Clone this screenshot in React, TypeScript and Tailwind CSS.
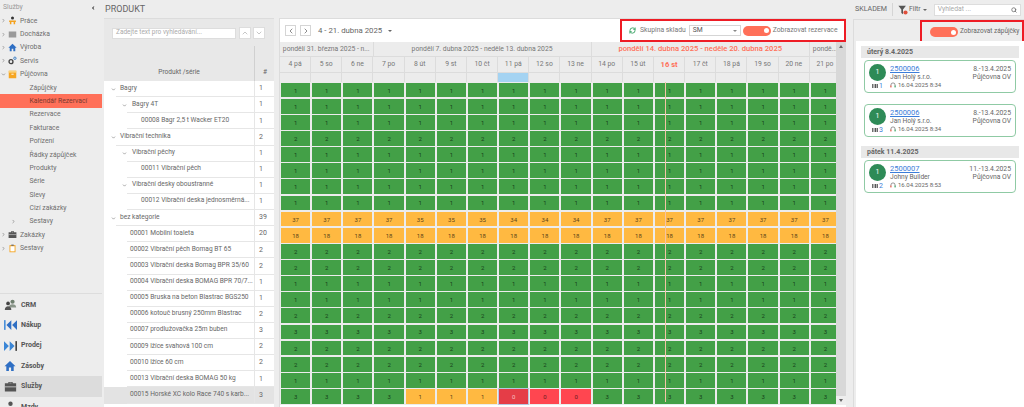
import { ChevronDown, ChevronLeft, ChevronRight, ChevronUp, RefreshCw, Search } from "lucide-react"
import type { ReactNode } from "react"

type TreeRow = { label: string; count: number; level: 0 | 1 | 2 | 3; open?: boolean }

const treeRows: TreeRow[] = [
  { label: "Bagry", count: 1, level: 0, open: true },
  { label: "Bagry 4T", count: 1, level: 1, open: true },
  { label: "00008 Bagr 2,5 t Wacker ET20", count: 1, level: 2 },
  { label: "Vibrační technika", count: 2, level: 0, open: true },
  { label: "Vibrační pěchy", count: 1, level: 1, open: true },
  { label: "00011 Vibrační pěch", count: 1, level: 2 },
  { label: "Vibrační desky oboustranné", count: 1, level: 1, open: true },
  { label: "00012 Vibrační deska jednosměrná...", count: 1, level: 2 },
  { label: "bez kategorie", count: 39, level: 0, open: true },
  { label: "00001 Mobilní toaleta", count: 20, level: 3 },
  { label: "00002 Vibrační pěch Bomag BT 65", count: 2, level: 3 },
  { label: "00003 Vibrační deska Bomag BPR 35/60", count: 2, level: 3 },
  { label: "00004 Vibrační deska BOMAG BPR 70/7...", count: 1, level: 3 },
  { label: "00005 Bruska na beton Blastrac BGS250", count: 1, level: 3 },
  { label: "00006 kotouč brusný 250mm Blastrac", count: 2, level: 3 },
  { label: "00007 prodlužovačka 25m buben", count: 3, level: 3 },
  { label: "00009 lžíce svahová 100 cm", count: 2, level: 3 },
  { label: "00010 lžíce 60 cm", count: 2, level: 3 },
  { label: "00013 Vibrační deska BOMAG 50 kg", count: 1, level: 3 },
  { label: "00015 Horské XC kolo Race 740 s karb...", count: 3, level: 3 },
]

const days = ["4 pá", "5 so", "6 ne", "7 po", "8 út", "9 st", "10 čt", "11 pá", "12 so", "13 ne", "14 po", "15 út", "16 st", "17 čt", "18 pá", "19 so", "20 ne", "21 po"]

const flat = (n: number) => Array.from({ length: 18 }, () => n)
const gridRows: number[][] = [
  flat(1), flat(1), flat(1), flat(2), flat(1), flat(1), flat(1), flat(1),
  [37, 37, 37, 37, 35, 35, 35, 34, 34, 34, 37, 37, 37, 37, 37, 37, 37, 37],
  flat(18), flat(2), flat(2), flat(1), flat(1), flat(2), flat(3), flat(2), flat(2), flat(1),
  [3, 3, 3, 3, 1, 1, 1, 0, 0, 0, 3, 3, 3, 3, 3, 3, 3, 3],
]

const IconWorker = () => (
  <svg viewBox="0 0 12 12" className="size-[9px]">
    <circle cx="6" cy="2.500" r="2" fill="#333" />
    <path d="M1.500 6h9v2H9.500v3H7.500V8h-3v3h-2V8h-1z" fill="#f4a11d" />
  </svg>
)
const IconSquare = () => (
  <svg viewBox="0 0 12 12" className="size-[9px]">
    <rect x="1" y="2" width="10" height="8" fill="#9a9a9a" />
  </svg>
)
const IconHome = ({ size = "size-[9px]" }: { size?: string }) => (
  <svg viewBox="0 0 12 12" className={size}>
    <path d="M6 1 0.500 6.200h1.800V11h2.600V7.600h2.200V11h2.600V6.200h1.800z" fill="#2f6fc4" />
  </svg>
)
const IconGears = () => (
  <svg viewBox="0 0 12 12" className="size-[9px]">
    <circle cx="4" cy="7.500" r="2.600" fill="none" stroke="#444" strokeWidth="1.800" />
    <circle cx="9.200" cy="3" r="1.600" fill="none" stroke="#3d7fc4" strokeWidth="1.300" />
  </svg>
)
const IconBox = () => (
  <svg viewBox="0 0 12 12" className="size-[9px]">
    <rect x="1" y="1" width="10" height="10" fill="#f6a623" />
    <rect x="1" y="1" width="10" height="2.600" fill="#fbd27a" />
    <rect x="4.500" y="5" width="3" height="1.200" fill="#fff" />
  </svg>
)
const IconCase = ({ size = "size-[9px]" }: { size?: string }) => (
  <svg viewBox="0 0 12 12" className={size}>
    <path d="M4 3V1.800h4V3h3.200v7.600H.8V3zM5 3h2v-.5H5z" fill="#555" />
    <rect x="0.800" y="6" width="10.400" height="0.700" fill="#ddd" />
  </svg>
)
const IconClipboard = () => (
  <svg viewBox="0 0 12 12" className="size-[9px]">
    <rect x="2" y="1.500" width="8" height="9.500" fill="#f6a623" />
    <rect x="3.200" y="3" width="5.600" height="6.800" fill="#fff" />
    <rect x="4.400" y="0.800" width="3.200" height="1.600" fill="#666" />
  </svg>
)
const IconCrm = () => (
  <svg viewBox="0 0 16 14" className="h-[12px] w-[13px]">
    <circle cx="10.500" cy="3" r="2.600" fill="#6f7f6f" />
    <path d="M6 10c0-2.600 2-4 4.500-4S15 7.400 15 10z" fill="#8a968a" />
    <circle cx="5" cy="5" r="2.300" fill="#444" />
    <path d="M1 13c0-3 1.800-4.500 4-4.500S9 10 9 13z" fill="#555" />
  </svg>
)
const IconBuy = () => (
  <svg viewBox="0 0 16 12" className="h-[10px] w-[13px]">
    <rect x="0" y="0" width="2" height="12" fill="#4a90d9" />
    <path d="M9 0v12L3 6zM16 0v12L10 6z" fill="#2f6fc4" />
  </svg>
)
const IconSell = () => (
  <svg viewBox="0 0 16 12" className="h-[10px] w-[13px]">
    <rect x="14" y="0" width="2" height="12" fill="#444" />
    <path d="M7 0v12l6-6zM0 0v12l6-6z" fill="#3b86d6" />
  </svg>
)
const IconPerson = () => (
  <svg viewBox="0 0 12 12" className="size-[11px]">
    <circle cx="6" cy="3" r="2.400" fill="#555" />
    <path d="M1.500 12c0-3.500 2-5.500 4.500-5.500s4.500 2 4.500 5.500z" fill="#555" />
  </svg>
)
const IconFilter = () => (
  <svg viewBox="0 0 12 12" className="size-[10px]">
    <path d="M0.500 1h9L6 5.500V11L4 9.500v-4z" fill="#555" />
    <circle cx="9" cy="9" r="2.500" fill="#e0503c" />
  </svg>
)
const IconBarcode = () => (
  <svg viewBox="0 0 10 7" className="h-[4px] w-[6px]">
    <path d="M0 0h2v7H0zM3 0h1v7H3zM5 0h2v7H5zM8 0h2v7H8z" fill="#555" />
  </svg>
)
const IconHeadset = () => (
  <svg viewBox="0 0 10 10" className="size-[6px]">
    <path d="M1.500 6.500V5a3.500 3.500 0 0 1 7 0v1.500" fill="none" stroke="#555" strokeWidth="1" />
    <rect x="0.500" y="6" width="2" height="3" fill="#e0503c" />
    <rect x="7.500" y="6" width="2" height="3" fill="#2e9e5b" />
  </svg>
)

const Toggle = () => (
  <span className="flex h-[10px] w-[28px] shrink-0 items-center justify-end rounded-full bg-[#ff7059] pr-[2px]">
    <span className="size-[5px] rounded-full bg-white" />
  </span>
)

const Caret = ({ open }: { open: boolean }) =>
  open ? <ChevronDown className="size-[5px] text-[#777]" strokeWidth={3} /> : <ChevronRight className="size-[5px] text-[#777]" strokeWidth={3} />

const NavRow = ({ icon, label, open }: { icon: ReactNode; label: string; open?: boolean }) => (
  <div className="flex h-[13.400px] items-center pl-[1px]">
    <span className="w-[6px]"><Caret open={!!open} /></span>
    <span className="flex w-[10px] justify-center pl-[1px]">{icon}</span>
    <span className="ml-[3px]">{label}</span>
  </div>
)

const SubRow = ({ label, active, arrow }: { label: string; active?: boolean; arrow?: boolean }) => (
  <div className={`relative flex h-[13.400px] items-center pl-[29.500px] ${active ? "bg-[#ff7059] text-[#7a3a30]" : ""}`}>
    {arrow && <ChevronRight className="absolute left-[11px] size-[5px] text-[#777]" strokeWidth={3} />}
    {label}
  </div>
)

const ModuleRow = ({ icon, label, active }: { icon: ReactNode; label: string; active?: boolean }) => (
  <div className={`flex h-[20.400px] items-center gap-[4px] pl-[3px] pr-[1px] font-bold text-[#555] ${active ? "bg-[#dcdcdc]" : ""}`}>
    <span className="flex w-[14px] justify-center">{icon}</span>
    {label}
  </div>
)

const Sidebar = () => (
  <div className="flex h-full w-[102px] shrink-0 flex-col text-[6.800px] text-[#6e6e6e]">
    <div className="flex h-[14px] items-center justify-between pl-[3px] pr-[6px] pt-[1px] text-[#9a9a9a]">
      Služby
      <ChevronLeft className="size-[6px] text-[#555]" strokeWidth={3} fill="#555" />
    </div>
    <NavRow icon={<IconWorker />} label="Práce" />
    <NavRow icon={<IconSquare />} label="Docházka" />
    <NavRow icon={<IconHome />} label="Výroba" />
    <NavRow icon={<IconGears />} label="Servis" />
    <NavRow icon={<IconBox />} label="Půjčovna" open />
    <SubRow label="Zápůjčky" />
    <SubRow label="Kalendář Rezervací" active />
    <SubRow label="Rezervace" />
    <SubRow label="Fakturace" />
    <SubRow label="Pořízení" />
    <SubRow label="Řádky zápůjček" />
    <SubRow label="Produkty" />
    <SubRow label="Série" />
    <SubRow label="Slevy" />
    <SubRow label="Cizí zakázky" />
    <SubRow label="Sestavy" arrow />
    <NavRow icon={<IconCase />} label="Zakázky" />
    <NavRow icon={<IconClipboard />} label="Sestavy" />
    <div className="mb-[-10px] mt-auto border-t border-[#dddddd] pt-[1px] text-[7px]">
      <ModuleRow icon={<IconCrm />} label="CRM" />
      <ModuleRow icon={<IconBuy />} label="Nákup" />
      <ModuleRow icon={<IconSell />} label="Prodej" />
      <ModuleRow icon={<IconHome size="size-[12px]" />} label="Zásoby" />
      <ModuleRow icon={<IconCase size="size-[13px]" />} label="Služby" active />
      <ModuleRow icon={<IconPerson />} label="Mzdy" />
    </div>
  </div>
)

const levelIndent = { 0: "ml-[12px] pl-[4px]", 1: "ml-[23px] pl-[5px]", 2: "ml-[23px] pl-[14px]", 3: "ml-[23px] pl-[3px]" }
const caretLeft = { 0: "left-[6.500px]", 1: "left-[18px]", 2: "", 3: "" }

const ProductPanel = () => (
  <div className="flex w-[172px] shrink-0 flex-col pl-[2px]">
    <div className="flex h-[18px] items-center pl-[1px] pt-[1px] text-[9px] text-[#666]">PRODUKT</div>
    <div className="flex flex-1 flex-col border-t border-[#dcdcdc] bg-white text-[6.600px] text-[#666]">
      <div className="flex h-[27px] items-center gap-[2px] bg-[#e8e8e8] pl-[8px] pt-[1px]">
        <div className="flex h-[11px] w-[124px] items-center border border-[#dddddd] bg-white pl-[3px] text-[6.500px] text-[#aaa]">Zadejte text pro vyhledávání...</div>
        <span className="ml-[1px] flex size-[12px] items-center justify-center border border-[#dddddd] bg-white"><ChevronUp className="size-[8px] text-[#aaa]" /></span>
        <span className="flex size-[12px] items-center justify-center border border-[#dddddd] bg-white"><ChevronDown className="size-[8px] text-[#aaa]" /></span>
      </div>
      <div className="flex h-[35px] bg-[#e8e8e8]">
        <div className="flex flex-1 items-end justify-center pb-[3px]">Produkt /série</div>
        <div className="flex w-[20px] items-end border-l border-[#d0d0d0] pb-[3px] pl-[8px]">#</div>
      </div>
      {treeRows.map((row, i) => (
        <div key={i} className={`relative flex h-[16.130px] items-center ${i === treeRows.length - 1 ? "bg-[#e3e3e3]" : ""}`}>
          {row.open && <span className={`absolute ${caretLeft[row.level]}`}><Caret open /></span>}
          <div className={`flex h-full min-w-0 flex-1 items-center overflow-hidden whitespace-nowrap border-b border-[#e6e6e6] ${levelIndent[row.level]}`}>{row.label}</div>
          <div className="flex h-full w-[20px] items-center border-b border-l border-[#e6e6e6] pl-[4px] text-[7px]">{row.count}</div>
        </div>
      ))}
    </div>
  </div>
)

const Cell = ({ value, warn, selected }: { value: number; warn: boolean; selected: boolean }) => {
  const tone = selected
    ? "bg-[#e53d47] text-[#f7c0c0] outline outline-[#b8c8e0]"
    : value === 0
      ? "bg-[#ff4650] text-[#6b1c20]"
      : warn
        ? "bg-[#ffb941] text-[#5e4518]"
        : "bg-[#43a047] text-[#17401b]"
  return (
    <div className="flex h-[16.130px] items-center justify-center px-[1px] py-[0.700px]">
      <div className={`flex h-full w-full items-center justify-center text-[6px] ${tone}`}>{value}</div>
    </div>
  )
}

const CalendarPanel = () => (
  <div className="ml-[5px] flex w-[567px] shrink-0 flex-col pt-[18px]">
    <div className="flex flex-1 flex-col border-l border-t border-[#dcdcdc] bg-white text-[#777]">
      <div className="flex h-[23px] items-center bg-white">
        <span className="ml-[5px] flex size-[11px] items-center justify-center border border-[#d5d5d5]"><ChevronLeft className="size-[8px] text-[#555]" /></span>
        <span className="ml-[4px] flex size-[11px] items-center justify-center border border-[#d5d5d5]"><ChevronRight className="size-[8px] text-[#555]" /></span>
        <span className="ml-[7px] text-[7.800px] text-[#666]">4 - 21. dubna 2025</span>
        <span className="ml-[6px] size-0 border-x-[2px] border-t-[2px] border-x-transparent border-t-[#666]" />
        <div className="ml-auto flex h-[23px] w-[226px] items-center border-2 border-[#ee1c25] pl-[7px] text-[6.800px]">
          <RefreshCw className="size-[7px] text-[#2e9e5b]" strokeWidth={3} />
          <span className="ml-[4px] whitespace-nowrap">Skupina skladu</span>
          <span className="ml-[3px] flex h-[11px] w-[52px] items-center justify-between border border-[#d5d5d5] px-[3px] text-[#555]">
            SM
            <span className="size-0 border-x-[2px] border-t-[2px] border-x-transparent border-t-[#888]" />
          </span>
          <span className="ml-[2px]"><Toggle /></span>
          <span className="ml-[2px] whitespace-nowrap">Zobrazovat rezervace</span>
        </div>
      </div>
      <div className="flex min-h-0 flex-1">
        <div className="relative min-w-0 flex-1 overflow-hidden">
          <div className="w-[561px] text-[6.800px]">
            <div className="grid h-[15px] grid-cols-[repeat(18,minmax(0,1fr))] bg-[#ececec]">
              <div className="col-span-3 flex items-center justify-center whitespace-nowrap border-b border-r border-[#dcdcdc]">pondělí 31. března 2025 - n...</div>
              <div className="col-span-7 flex items-center justify-center border-b border-r border-[#dcdcdc]">pondělí 7. dubna 2025 - neděle 13. dubna 2025</div>
              <div className="col-span-7 flex items-center justify-center border-b border-r border-[#dcdcdc] text-[7.600px] font-medium text-[#ff7059]">pondělí 14. dubna 2025 - neděle 20. dubna 2025</div>
              <div className="flex items-center overflow-hidden whitespace-nowrap border-b border-[#dcdcdc] pl-[3px]">pondě...</div>
            </div>
            <div className="grid h-[16px] grid-cols-[repeat(18,minmax(0,1fr))] bg-[#ececec]">
              {days.map((day) => (
                <div key={day} className={`flex items-center justify-center border-b border-r border-[#dcdcdc] ${day === "16 st" ? "text-[7.600px] font-bold text-[#ff7059]" : ""}`}>{day}</div>
              ))}
            </div>
            <div className="grid h-[9px] grid-cols-[repeat(18,minmax(0,1fr))] bg-[#ececec]">
              {days.map((day) => (
                <div key={day} className={`border-r border-[#dcdcdc] ${day === "11 pá" ? "bg-[#a4d3f2]" : ""}`} />
              ))}
            </div>
            <div className="bg-[#ececec]">
              {gridRows.map((row, r) => (
                <div key={r} className="grid grid-cols-[repeat(18,minmax(0,1fr))]">
                  {row.map((value, c) => (
                    <Cell key={c} value={value} warn={r === 8 || r === 9 || (r === 19 && value === 1)} selected={r === 19 && c === 7} />
                  ))}
                </div>
              ))}
            </div>
          </div>
          <span className="absolute bottom-[3px] left-[385px] top-[40px] w-[1px] bg-[#f4c4a4]" />
        </div>
        <div className="flex w-[10px] shrink-0 flex-col items-center justify-between bg-[#d8d8d8]">
          <span className="mt-[3px] size-0 border-x-[2.500px] border-b-[3px] border-x-transparent border-b-[#666]" />
          <span className="flex h-[9px] w-full items-center justify-center bg-[#eeeeee]">
            <span className="size-0 border-x-[2.500px] border-t-[3px] border-x-transparent border-t-[#666]" />
          </span>
        </div>
      </div>
      <div className="h-[3px] bg-white" />
    </div>
  </div>
)

const Booking = ({ code, customer, dates, stamp, qty }: { code: string; customer: string; dates: string; stamp: string; qty: number }) => (
  <div className="mx-[8px] flex h-[33px] rounded-[4px] border border-[#8fcaa4] bg-white px-[3px] pt-[3px] text-[#666]">
    <div className="flex w-[19px] flex-col items-center">
      <span className="flex size-[17px] items-center justify-center rounded-full bg-[#2e8b57] text-[7px] text-white">1</span>
      <span className="mt-[1px] flex items-center gap-[1px] text-[7px] leading-[8px] text-[#3b7dd8]"><IconBarcode />{qty}</span>
    </div>
    <div className="ml-[3px] flex-1">
      <div className="text-[7.500px] leading-[9px] text-[#3b7dd8] underline">{code}</div>
      <div className="text-[6.600px] leading-[8px]">{customer}</div>
      <div className="flex items-center gap-[2px] text-[6px] leading-[8px]"><IconHeadset />{stamp}</div>
    </div>
    <div className="mt-[1px] pr-[1px] text-right text-[6.800px] leading-[8px]">
      <div>{dates}</div>
      <div>Půjčovna OV</div>
    </div>
  </div>
)

const StockPanel = () => (
  <div className="ml-[7px] flex min-w-0 flex-1 flex-col">
    <div className="flex h-[19px] items-center text-[6.800px] text-[#666]">
      <span className="ml-[2px] text-[7.100px]">SKLADEM</span>
      <span className="ml-[5px] h-[13px] w-px bg-[#d5d5d5]" />
      <span className="ml-[5px]"><IconFilter /></span>
      <span className="ml-[1px]">Filtr</span>
      <span className="ml-[2px] size-0 border-x-[2px] border-t-[2px] border-x-transparent border-t-[#666]" />
      <div className="ml-[7px] flex h-[12px] w-[87px] items-center justify-between border border-[#dddddd] bg-white px-[3px] text-[#aaa]">
        Vyhledat ...
        <Search className="size-[6px] text-[#666]" strokeWidth={3} />
      </div>
    </div>
    <div className="flex flex-1 flex-col border-l border-t border-[#dcdcdc] pl-[2px]">
      <div className="flex h-[21px] justify-end">
        <div className="flex h-[24px] w-[104px] items-center border-2 border-[#ee1c25] bg-[#ededed] pl-[8px] text-[6.500px] text-[#666]">
          <Toggle />
          <span className="ml-[2px] whitespace-nowrap">Zobrazovat zápůjčky</span>
        </div>
      </div>
      <div className="flex-1 bg-white pt-[5px]">
        <div className="mx-[5px] mb-[2px] flex h-[12px] items-center bg-[#e8e8e8] pl-[6px] text-[7px] font-bold text-[#666]">úterý 8.4.2025</div>
        <Booking code="2500006" customer="Jan Holý s.r.o." dates="8.-13.4.2025" stamp="16.04.2025 8:34" qty={1} />
        <div className="h-[11px]" />
        <Booking code="2500006" customer="Jan Holý s.r.o." dates="8.-13.4.2025" stamp="16.04.2025 8:34" qty={3} />
        <div className="h-[9px]" />
        <div className="mx-[5px] mb-[2px] flex h-[12px] items-center bg-[#e8e8e8] pl-[6px] text-[7px] font-bold text-[#666]">pátek 11.4.2025</div>
        <Booking code="2500007" customer="Johny Builder" dates="11.-13.4.2025" stamp="16.04.2025 8:53" qty={2} />
      </div>
    </div>
  </div>
)

export default function App() {
  return (
    <div className="flex h-[407px] w-[1024px] overflow-hidden bg-[#ededed] font-['Roboto',sans-serif]">
      <Sidebar />
      <ProductPanel />
      <CalendarPanel />
      <StockPanel />
    </div>
  )
}
